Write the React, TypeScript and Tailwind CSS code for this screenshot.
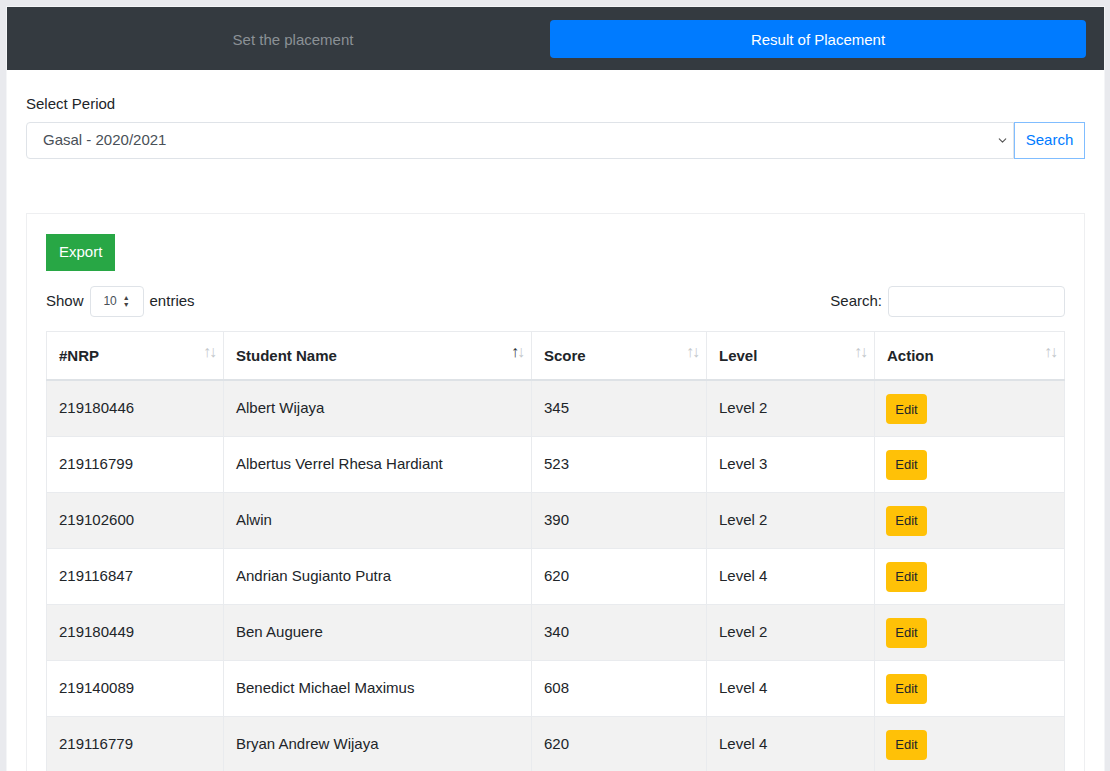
import {ChevronDown} from "lucide-react";

type Row = {
  nrp: string;
  name: string;
  score: number;
  level: string;
};

const rows: Row[] = [
  {nrp: "219180446", name: "Albert Wijaya", score: 345, level: "Level 2"},
  {nrp: "219116799", name: "Albertus Verrel Rhesa Hardiant", score: 523, level: "Level 3"},
  {nrp: "219102600", name: "Alwin", score: 390, level: "Level 2"},
  {nrp: "219116847", name: "Andrian Sugianto Putra", score: 620, level: "Level 4"},
  {nrp: "219180449", name: "Ben Auguere", score: 340, level: "Level 2"},
  {nrp: "219140089", name: "Benedict Michael Maximus", score: 608, level: "Level 4"},
  {nrp: "219116779", name: "Bryan Andrew Wijaya", score: 620, level: "Level 4"},
];

// sort arrows of a datatables header
const SortIcon = ({active}: {active?: boolean}) => (
  <span className="absolute right-[8px] top-[12px] flex text-[16px] leading-none tracking-[-2px] font-normal select-none">
    <span className={active ? "text-[#343a40]" : "text-[#c4c8cc]"}>↑</span>
    <span className="text-[#c4c8cc]">↓</span>
  </span>
);

const headers = [
  {label: "#NRP", width: "w-[177px]"},
  {label: "Student Name", width: "w-[308px]", active: true},
  {label: "Score", width: "w-[175px]"},
  {label: "Level", width: "w-[168px]"},
  {label: "Action", width: "w-[190px]"},
];

const App = () => {
  return (
    <div
      className="min-h-screen bg-[#e9eaee] pt-[6px] pl-[6px] pr-[5px] text-[#212529]"
      style={{fontFamily: '"Liberation Sans", Arial, sans-serif'}}
    >
      <div className="border border-[#f4f5f7] bg-white min-h-[770px]">
        {/* tabs */}
        <div className="flex items-center bg-[#343a40] h-[63px] pl-[19px] pr-[18px]">
          <button className="flex-1 h-[38px] pl-[10px] pt-[3px] text-[15px] text-[#8b9196]">
            Set the placement
          </button>
          <button className="w-[536px] h-[38px] pt-[3px] rounded bg-[#007bff] text-[15px] text-white">
            Result of Placement
          </button>
        </div>

        <div className="px-[19px] pt-[23px]">
          <div className="text-[15px] mb-[6px]">Select Period</div>
          <div className="flex">
            <div className="flex-1 flex items-center justify-between h-[37px] border border-[#dfe3e8] rounded-l pl-[16px] pr-[4px] text-[15px] text-[#495057]">
              <span>Gasal - 2020/2021</span>
              <ChevronDown size={13} strokeWidth={2} className="text-[#555]" />
            </div>
            <button className="w-[71px] h-[37px] border border-[#80bdff] text-[15px] text-[#007bff]">
              Search
            </button>
          </div>

          {/* card */}
          <div className="mt-[54px] border border-[#eeeff1] px-[19px] pt-[20px]">
            <button className="h-[37px] px-[13px] bg-[#28a745] text-white text-[15px]">
              Export
            </button>

            <div className="flex items-center justify-between mt-[15px] h-[31px] text-[15px]">
              <div className="flex items-center gap-[6px]">
                <span>Show</span>
                <div className="flex items-center justify-center gap-[6px] w-[54px] h-[31px] border border-[#dfe3e8] rounded text-[12px] text-[#495057]">
                  <span>10</span>
                  <span className="flex flex-col text-[7px] leading-[7px] text-[#444]">
                    <span>▲</span>
                    <span>▼</span>
                  </span>
                </div>
                <span>entries</span>
              </div>
              <div className="flex items-center gap-[6px]">
                <span>Search:</span>
                <div className="w-[177px] h-[31px] border border-[#dfe3e8] rounded" />
              </div>
            </div>

            <table className="mt-[14px] w-[1018px] border-collapse table-fixed text-[15px]">
              <thead>
                <tr className="h-[49px]">
                  {headers.map(h => (
                    <th
                      key={h.label}
                      className={`${h.width} relative border border-[#e9ebee] border-b-2 border-b-[#dee2e6] px-[12px] pt-[2px] text-left font-bold`}
                    >
                      {h.label}
                      <SortIcon active={h.active} />
                    </th>
                  ))}
                </tr>
              </thead>
              <tbody>
                {rows.map((r, i) => (
                  <tr key={r.nrp} className={`h-[56px] ${i % 2 === 0 ? "bg-[#f2f2f2]" : "bg-white"}`}>
                    <td className="border border-[#e9ebee] px-[12px]">{r.nrp}</td>
                    <td className="border border-[#e9ebee] px-[12px]">{r.name}</td>
                    <td className="border border-[#e9ebee] px-[12px]">{r.score}</td>
                    <td className="border border-[#e9ebee] px-[12px]">{r.level}</td>
                    <td className="border border-[#e9ebee] px-[11px]">
                      <button className="mt-[2px] w-[41px] h-[30px] rounded bg-[#ffc107] text-[13px] text-[#212529]">
                        Edit
                      </button>
                    </td>
                  </tr>
                ))}
              </tbody>
            </table>
          </div>
        </div>
      </div>
    </div>
  );
};

export default App;
